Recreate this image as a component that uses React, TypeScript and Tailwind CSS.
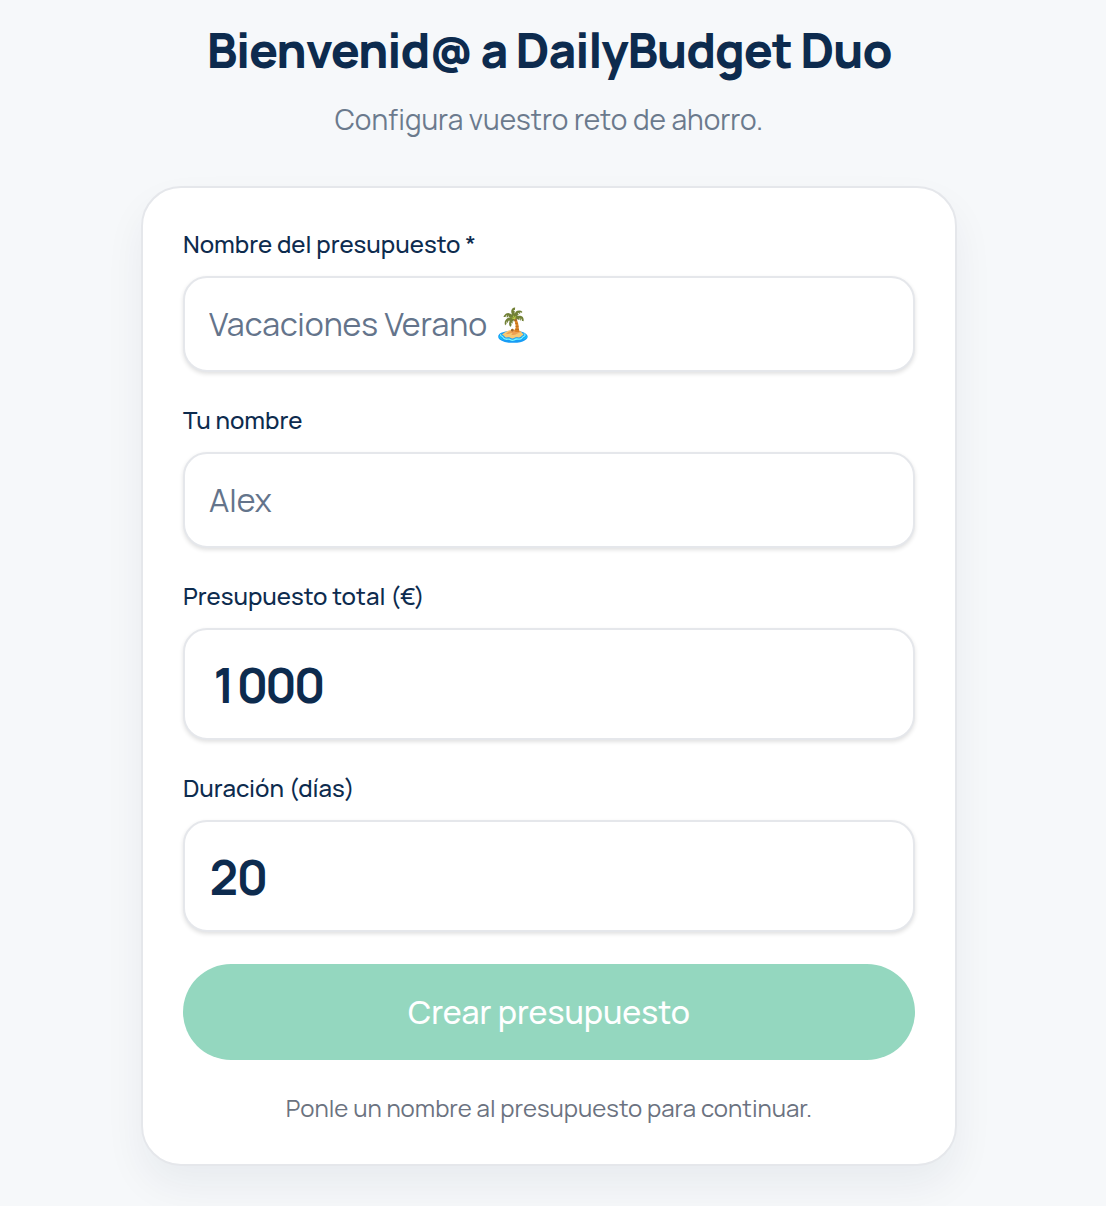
function Field({
    label,
    value,
    placeholder,
    large,
}: {
    label: string;
    value?: string;
    placeholder?: string;
    large?: boolean;
}) {
    return (
        <div>
            <label className="mb-[16px] block text-[24px] leading-[32px] font-medium text-[#0d2b4e]">
                {label}
            </label>
            <input
                readOnly
                value={value ?? ''}
                placeholder={placeholder}
                className={`w-full rounded-[24px] border-2 border-[#e5e7eb] bg-white px-6 shadow-[0_2px_4px_rgba(0,0,0,0.12)] outline-none placeholder:text-[#64748b] ${large ? 'h-[112px] text-[48px] font-bold tracking-tight text-[#0d2b4e] tabular-nums' : 'h-[96px] text-[32px] text-[#0d2b4e]'}`}
            />
        </div>
    );
}

export default function App() {
    return (
        <div className="flex min-h-[1206px] flex-col items-center bg-[#f6f8fa] pr-[8px] font-[Manrope,Inter,sans-serif]">
            <h1 className="mt-[20px] text-[48px] leading-[60px] font-extrabold tracking-tight text-[#0d2b4e]">
                Bienvenid@ a DailyBudget Duo
            </h1>
            <p className="mt-[19px] text-[28px] leading-[40px] text-[#6b7a8d]">
                Configura vuestro reto de ahorro.
            </p>
            <div className="mt-[47px] w-[816px] rounded-[40px] border-2 border-[#e5e7eb] bg-white p-[40px] shadow-[0_20px_40px_rgba(15,42,71,0.06)]">
                <div className="flex flex-col gap-[32px]">
                    <Field label="Nombre del presupuesto *" placeholder="Vacaciones Verano 🏝️" />
                    <Field label="Tu nombre" placeholder="Alex" />
                    <Field label="Presupuesto total (€)" value="1000" large />
                    <Field label="Duración (días)" value="20" large />
                </div>
                <button className="mt-[32px] h-[96px] w-full rounded-full bg-[#94d7bf] text-[32px] font-medium text-white">
                    Crear presupuesto
                </button>
                <p className="mt-[32px] text-center text-[24px] leading-[32px] text-[#6b7280]">
                    Ponle un nombre al presupuesto para continuar.
                </p>
            </div>
        </div>
    );
}
